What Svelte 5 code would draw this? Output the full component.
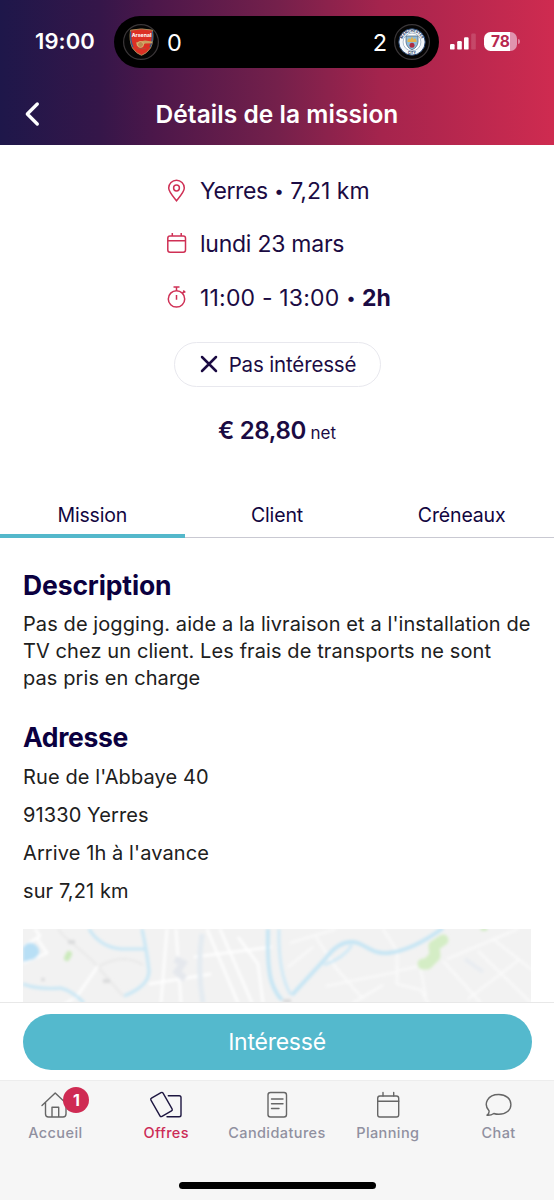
<script lang="ts">
  type Tab = { id: string; label: string };
  type NavItem = { id: string; label: string; badge?: number };

  const tabs: Tab[] = [
    { id: 'mission', label: 'Mission' },
    { id: 'client', label: 'Client' },
    { id: 'creneaux', label: 'Créneaux' }
  ];

  const navItems: NavItem[] = [
    { id: 'accueil', label: 'Accueil', badge: 1 },
    { id: 'offres', label: 'Offres' },
    { id: 'candidatures', label: 'Candidatures' },
    { id: 'planning', label: 'Planning' },
    { id: 'chat', label: 'Chat' }
  ];

  const address = ["Rue de l'Abbaye 40", '91330 Yerres', "Arrive 1h à l'avance", 'sur 7,21 km'];

  let activeTab = $state('mission');
  let activeNav = $state('offres');
</script>

<div class="screen">
  <header>
    <div class="status">
      <span class="time">19:00</span>
      <div class="island">
        <svg class="crest" width="36" height="36" viewBox="0 0 36 36">
          <circle cx="18" cy="18" r="17.4" fill="#050505" stroke="#3a3638" stroke-width="1.2" />
          <path d="M7.5 6.2Q18.5 3.6 29.5 6.2Q31 17 27.5 24Q24 29.5 18.5 31.3Q13 29.5 9.5 24Q6 17 7.5 6.2Z" fill="#dc3024" stroke="#a58a57" stroke-width="1" />
          <path d="M7.7 7.5Q7 17 10 23" fill="none" stroke="#315b8d" stroke-width="1.3" />
          <path d="M29.3 7.5Q30 17 27 23" fill="none" stroke="#315b8d" stroke-width="1.3" />
          <text x="18.5" y="13.2" text-anchor="middle" font-size="5.2" font-weight="700" fill="#fff">Arsenal</text>
          <path d="M13 18.5L22 16.5L29 17.5V19.2L22 19.5L19 22H14Z" fill="#c8a160" />
          <circle cx="17.5" cy="20.5" r="3" fill="#bc894f" stroke="#e2bd78" stroke-width=".8" />
          <path d="M14 24.5H23" stroke="#b44938" stroke-width="1.2" />
        </svg>
        <span class="score">0</span>
        <span class="score right">2</span>
        <svg class="crest" width="36" height="36" viewBox="0 0 36 36">
          <defs>
            <path id="ring" d="M8 18a10 10 0 0 1 20 0" />
          </defs>
          <circle cx="18" cy="18" r="17.4" fill="#050505" stroke="#3a3638" stroke-width="1.2" />
          <circle cx="18" cy="18" r="13.2" fill="#f2f6fa" stroke="#23416e" stroke-width="1" />
          <text font-size="3.5" font-weight="700" fill="#1d3763"><textPath href="#ring" startOffset="50%" text-anchor="middle">MANCHESTER</textPath></text>
          <text x="18" y="30" text-anchor="middle" font-size="3.3" font-weight="700" fill="#1d3763">CITY</text>
          <circle cx="18" cy="18" r="8.9" fill="#fff" stroke="#7894ae" stroke-width=".6" />
          <path d="M12 12H24V18Q23.5 23.5 18 25.8Q12.5 23.5 12 18Z" fill="#8fbcd9" stroke="#586c84" stroke-width=".8" />
          <path d="M13.5 16.5L15 14L16.5 15.5L18 12.5L19.5 15.5L21 14L22.5 16.5V18H13.5Z" fill="#e4b34e" />
          <circle cx="18" cy="21.2" r="2.5" fill="#ad2b42" />
        </svg>
      </div>
      <svg class="signal" width="26" height="17" viewBox="0 0 26 17">
        <rect x="0" y="11" width="4.6" height="5.6" rx="1.2" fill="#fff" />
        <rect x="7.2" y="8" width="4.6" height="8.6" rx="1.2" fill="#fff" />
        <rect x="14" y="4.2" width="4.6" height="12.4" rx="1.2" fill="#fff" />
        <rect x="21.2" y="0.5" width="4.6" height="16.1" rx="1.2" fill="#fff" opacity=".15" />
      </svg>
      <div class="battery"><span>78</span></div>
      <i class="battery-tip"></i>
    </div>
    <div class="title-bar">
      <button class="back" aria-label="Retour">
        <svg width="16" height="26" viewBox="0 0 16 26" fill="none" stroke="#fff" stroke-width="3.3" stroke-linecap="round" stroke-linejoin="round">
          <path d="M13.3 3L3.3 13L13.3 23" />
        </svg>
      </button>
      <h1>Détails de la mission</h1>
    </div>
  </header>

  <main>
    <section class="summary">
      <ul class="facts">
        <li>
          <svg width="20" height="24" viewBox="0 0 20 24">
            <path d="M9.5 21.7C7.5 19 1.7 13 1.7 9a7.8 7.8 0 0 1 15.6 0C17.3 13 11.5 19 9.5 21.7Z" />
            <circle cx="9.5" cy="9" r="2.9" />
          </svg>
          <span class="place"><span class="city">Yerres</span> <i>•</i> 7,21 km</span>
        </li>
        <li>
          <svg width="20" height="24" viewBox="0 0 20 24">
            <rect x="0.8" y="4" width="17.7" height="16.3" rx="2.2" />
            <path d="M0.8 8.7H18.5M5.3 1V4M14.2 1V4" />
          </svg>
          <span class="day">lundi 23 mars</span>
        </li>
        <li>
          <svg width="20" height="24" viewBox="0 0 20 24">
            <circle cx="9.5" cy="12.9" r="8.2" />
            <path d="M9.5 4.7V1.3M6.5 1.1H12.5M9.5 9V13.7M15.5 7.1L17.3 5.4M16.3 4.5L18.3 6.5" />
          </svg>
          <span class="hours">11:00 - 13:00 <b><i>•</i> 2h</b></span>
        </li>
      </ul>
      <button class="decline">
        <svg width="18" height="18" viewBox="0 0 18 18" stroke="#1b0b43" stroke-width="2.5" stroke-linecap="round">
          <path d="M2 2L16 16M16 2L2 16" />
        </svg>
        <span>Pas intéressé</span>
      </button>
      <p class="price"><strong>€ 28,80</strong> <small>net</small></p>
    </section>

    <nav class="tabs">
      {#each tabs as tab}
        <button class:active={activeTab === tab.id} onclick={() => (activeTab = tab.id)}>
          {tab.label}
        </button>
      {/each}
    </nav>

    <section class="details">
      <h2>Description</h2>
      <p class="description">
        Pas de jogging. aide a la livraison et a l'installation de<br />
        TV chez un client. Les frais de transports ne sont<br />
        pas pris en charge
      </p>
      <h2 class="second">Adresse</h2>
      <ul class="address">
        {#each address as line}
          <li>{line}</li>
        {/each}
      </ul>
      <svg class="map" width="508" height="90" viewBox="0 0 508 90" fill="none">
        <rect width="508" height="90" fill="#f2f2f2" />
        <g filter="url(#soft)">
          <path d="M35 0C45 14 60 20 75 38L100 67M75 38Q100 23 120 36" stroke="#e8e8e8" stroke-width="2" />
          <path d="M0 18L17 7L12 0M0 34L24 24L13 8M52 70L75 37M18 90L50 70M144 0L138 74M184 0L215 74M197 0L229 74M215 8L235 35L240 74M171 28L249 18M126 55L188 45M153 0L158 74" stroke="#fff" stroke-width="2.3" />
          <path d="M360 0L374 22L374 55L398 61L408 80M374 42L397 37L403 68M424 30L495 0M455 22L509 75M470 10L509 41M445 70L497 30M293 8L313 39L340 70M303 57L374 43M267 14L313 0M420 32L458 74M330 74L360 56M265 38L290 18" stroke="#fafafa" stroke-width="2.2" />
          <path d="M179 5Q174 38 180 74" stroke="#e4ebf1" stroke-width="5" />
          <path d="M152 30L160 34L154 43L162 50" stroke="#e5e8ed" stroke-width="7" />
          <path d="M442 30L460 43" stroke="#e8ecf1" stroke-width="4" />
          <path d="M0 18Q7 10 14 17Q20 24 11 30L0 33Z" fill="#b8dff5" />
          <path d="M66 0Q77 18 98 20L122 20M119 0Q124 23 126 42Q126 57 101 67M0 55Q16 61 38 59Q51 63 61 74" stroke="#c9e7f5" stroke-width="3.2" />
          <path d="M245 0Q244 40 249 54Q253 65 259 71M269 66L303 29Q318 9 335 14C348 20 352 25 365 24C386 22 405 10 420 -1" stroke="#c5e5f4" stroke-width="3.8" />
          <path d="M256 0Q255 45 268 66M301 36Q321 29 329 16" stroke="#cfe9f6" stroke-width="2.8" />
          <path d="M420 11L411 17L412 27L404 35L400 35" stroke="#d4edc5" stroke-width="11" stroke-linecap="round" stroke-linejoin="round" />
          <path d="M44 29L46 25" stroke="#cbeabb" stroke-width="6" stroke-linecap="round" />
          <path d="M459 0H463" stroke="#cbeabb" stroke-width="3" stroke-linecap="round" />
          <path d="M45 13H52M80 52H87M20 49V52M260 72H268" stroke="#d8d9da" stroke-width="3.5" />
        </g>
        <defs>
          <filter id="soft"><feGaussianBlur stdDeviation="1.4" /></filter>
        </defs>
      </svg>
    </section>
  </main>

  <div class="cta">
    <button><span>Intéressé</span></button>
  </div>

  <footer>
    <nav class="bottom-nav">
      {#each navItems as item}
        <button class:active={activeNav === item.id} onclick={() => (activeNav = item.id)}>
          <span class="icon">
            <svg width="36" height="30" viewBox="0 0 36 30">
              {#if item.id === 'accueil'}
                <path d="M5 16.5L18.2 4L31.4 16.5M8.5 13.5V25Q8.5 28 11.5 28H26Q29 28 29 25V13.5M15 28V18.2H21.7V28" />
              {:else if item.id === 'offres'}
                <path d="M20.3 6.700H31.2Q33 6.7 33 8.5V26Q33 27.8 31.2 27.8H19" />
                <rect x="6.5" y="5" width="14" height="21" rx="1.5" transform="rotate(-30 13.5 15.5)" />
              {:else if item.id === 'candidatures'}
                <rect x="9" y="3.5" width="18.5" height="24.5" rx="2.5" />
                <path d="M12.5 10H24M12.5 14.7H24M12.5 19.5H20" />
              {:else if item.id === 'planning'}
                <rect x="7.7" y="7" width="21" height="21" rx="2.2" />
                <path d="M7.7 12.3H28.7M13 3.5V7M23.7 3.5V7" />
              {:else}
                <path d="M6 26.2Q8.5 24.5 8 21.7C2 15 6.5 5.5 17.8 5.5C25 5.5 29.9 9.8 29.9 15.5C29.9 21.2 25 25.3 17.8 25.3Q15 25.3 12.8 24.5Q10 26.5 6 26.2Z" />
              {/if}
            </svg>
            {#if item.badge}
              <span class="badge">{item.badge}</span>
            {/if}
          </span>
          <span class="label">{item.label}</span>
        </button>
      {/each}
    </nav>
    <div class="home-indicator"></div>
  </footer>
</div>

<style>
  :global(body) {
    margin: 0;
    background: #fff;
  }

  .screen {
    width: 554px;
    height: 1200px;
    display: flex;
    flex-direction: column;
    overflow: hidden;
    background: #fff;
    color: #1b0b43;
    font-family: Inter, sans-serif;
  }

  button {
    font-family: inherit;
    color: inherit;
    background: none;
    border: 0;
    padding: 0;
  }

  h1,
  h2,
  p,
  ul {
    margin: 0;
    padding: 0;
  }

  li {
    list-style: none;
  }

  header {
    height: 145px;
    flex: none;
    background: linear-gradient(90deg, #1e174a 0%, #351649 18%, #4c174a 28%, #74204b 50%, #a5244d 69%, #cf2b50 100%);
    color: #fff;
  }

  .status {
    display: flex;
    align-items: center;
    height: 52px;
    padding-top: 16px;
  }

  .time {
    width: 79px;
    padding: 0 0 2px 35px;
    font-size: 22px;
    font-weight: 600;
    letter-spacing: 0.1px;
  }

  .island {
    display: flex;
    align-items: center;
    width: 307px;
    height: 52px;
    padding: 0 9px;
    border-radius: 26px;
    background: #000;
  }

  .crest {
    flex: none;
  }

  .score {
    margin-left: 8px;
    font-size: 23.5px;
  }

  .score.right {
    margin: 0 7px 0 auto;
  }

  .signal {
    margin: 0 0 2px 11px;
  }

  .battery {
    width: 33px;
    height: 19px;
    margin: 0 0 2px 8px;
    border-radius: 6.5px;
    background: linear-gradient(90deg, #fff 78%, #e093ae 78%);
    color: #b72850;
    text-align: center;
    font-size: 15.5px;
    line-height: 19px;
    font-weight: 700;
  }

  .battery-tip {
    width: 2px;
    height: 5px;
    margin: 0 0 2px 1px;
    border-radius: 0 2px 2px 0;
    background: #df849f;
  }

  .title-bar {
    display: grid;
    grid-template-columns: 48px 1fr 48px;
    align-items: center;
    height: 77px;
  }

  .back {
    width: 16px;
    height: 26px;
    margin: 15px 0 0 24px;
  }

  h1 {
    padding-top: 15px;
    text-align: center;
    font-size: 24.5px;
    line-height: 30px;
    font-weight: 600;
    letter-spacing: 0.05px;
  }

  main {
    flex: 1;
    min-height: 0;
    overflow: hidden;
  }

  .summary {
    display: flex;
    flex-direction: column;
    align-items: center;
    height: 347px;
  }

  .facts {
    width: 220px;
    padding-top: 19px;
  }

  .facts li {
    display: flex;
    align-items: center;
    gap: 13px;
    height: 53.5px;
    font-size: 23px;
    white-space: nowrap;
  }

  .facts svg {
    flex: none;
    fill: none;
    stroke: #cf3055;
    stroke-width: 1.5;
  }

  .facts i {
    font-size: 17px;
    font-style: normal;
    vertical-align: 2px;
  }

  .city {
    letter-spacing: -0.4px;
  }

  .day {
    letter-spacing: -0.25px;
  }

  .hours {
    letter-spacing: 0.18px;
  }

  .facts b {
    font-weight: 700;
  }

  .hours i {
    margin: 0 1px;
  }

  .decline {
    display: flex;
    align-items: center;
    justify-content: center;
    gap: 11px;
    box-sizing: border-box;
    width: 207px;
    height: 45px;
    margin-top: 17px;
    padding-left: 2px;
    border: 1.5px solid #e8e8ee;
    border-radius: 23px;
    font-size: 20.5px;
    letter-spacing: -0.15px;
  }

  .price {
    margin-top: 29px;
    line-height: 30px;
  }

  .price strong {
    font-size: 24px;
    font-weight: 600;
    letter-spacing: -0.35px;
  }

  .price small {
    font-size: 17px;
  }

  .tabs {
    display: grid;
    grid-template-columns: repeat(3, 1fr);
    height: 45px;
    border-bottom: 1px solid #c9c9d2;
  }

  .tabs button {
    margin-bottom: -1px;
    padding-top: 3px;
    border-bottom: 4px solid transparent;
    font-size: 19.5px;
    letter-spacing: -0.15px;
    color: #12063f;
  }

  .tabs button.active {
    border-color: #54b8cb;
  }

  .details {
    padding: 30px 23px 0;
  }

  h2 {
    color: #0b0040;
    font-size: 26.5px;
    line-height: 34px;
    font-weight: 700;
    letter-spacing: -0.13px;
  }

  .description {
    padding-top: 9px;
    color: #202020;
    font-size: 20px;
    line-height: 27px;
    letter-spacing: 0.09px;
    white-space: nowrap;
  }

  .second {
    margin-top: 28px;
    letter-spacing: -0.35px;
  }

  .address {
    padding-top: 4px;
    color: #202020;
    font-size: 20px;
    line-height: 38px;
    letter-spacing: 0.1px;
  }

  .map {
    display: block;
    margin-top: 19px;
  }

  .cta {
    flex: none;
    box-sizing: border-box;
    height: 78px;
    padding: 11px 22.5px 0;
    border-top: 1px solid #e8e8e8;
    background: #fff;
  }

  .cta button {
    width: 100%;
    height: 56px;
    padding-bottom: 1px;
    border-radius: 28px;
    background: #54b9cd;
    color: #fff;
    font-size: 23px;
    letter-spacing: -0.25px;
  }

  footer {
    flex: none;
    box-sizing: border-box;
    height: 120px;
    border-top: 1px solid #ededed;
    background: #f6f6f6;
  }

  .bottom-nav {
    display: grid;
    grid-template-columns: repeat(5, 1fr);
    height: 101px;
  }

  .bottom-nav button {
    display: flex;
    flex-direction: column;
    align-items: center;
    padding-top: 8px;
    color: #9090a0;
  }

  .icon {
    position: relative;
    height: 30px;
  }

  .icon svg {
    fill: none;
    stroke: #666;
    stroke-width: 1.4;
    stroke-linejoin: round;
    stroke-linecap: round;
  }

  .active .icon svg {
    stroke: #1d1640;
  }

  .badge {
    position: absolute;
    left: 26px;
    top: -2px;
    width: 26px;
    height: 26px;
    border-radius: 50%;
    background: #cf2b53;
    color: #fff;
    font-size: 16px;
    line-height: 26px;
    font-weight: 700;
    text-align: center;
  }

  .label {
    margin-top: 4px;
    font-size: 14.5px;
    line-height: 20px;
    font-weight: 500;
    letter-spacing: 0.4px;
  }

  .active .label {
    color: #cc2b57;
  }

  .home-indicator {
    width: 197px;
    height: 7px;
    margin: 0 auto;
    border-radius: 4px;
    background: #000;
  }
</style>
